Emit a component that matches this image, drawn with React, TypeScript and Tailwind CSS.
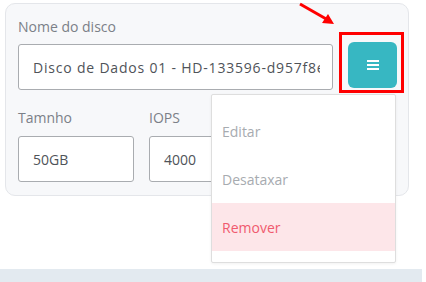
import React from "react";

export default function App() {
  return (
    <div
      className="relative w-[426px] h-[282px] bg-white overflow-hidden"
      style={{ fontFamily: '"Open Sans", sans-serif' }}
    >
      <div className="pt-[3px] pl-[5px] w-[409px]">
        <div className="rounded-[10px] border border-[#e4e6ea] bg-[#f7f8fa] pl-[12px] pr-[11px] pt-[14px] pb-[13px]">
          <div className="text-[14px] leading-[18px] text-[#7b8088]">Nome do disco</div>
          <div className="mt-[8px] flex items-center gap-[15px]">
            <div className="flex-1 min-w-0 h-[46px] rounded-[3px] border border-[#a9acb0] bg-white flex items-center pl-[14px] pr-[12px] text-[14px] tracking-[0.8px] text-[#4f5359]">
              <span className="block flex-1 min-w-0 overflow-hidden whitespace-nowrap">
                Disco de Dados 01 - HD-133596-d957f8ea
              </span>
            </div>
            <div className="w-[49px] h-[46px] -mt-[4px] rounded-[6px] bg-[#37b7c2] flex items-center justify-center">
              <div className="flex flex-col gap-[2px]">
                <div className="w-[12px] h-[2px] bg-white"></div>
                <div className="w-[12px] h-[2px] bg-white"></div>
                <div className="w-[12px] h-[2px] bg-white"></div>
              </div>
            </div>
          </div>
          <div className="mt-[19px] flex gap-[15px]">
            <div className="w-[116px]">
              <div className="text-[14px] leading-[18px] text-[#7b8088]">Tamnho</div>
              <div className="mt-[9px] h-[46px] rounded-[3px] border border-[#a9acb0] bg-white flex items-center pl-[14px] text-[14px] text-[#4f5359]">
                50GB
              </div>
            </div>
            <div className="w-[116px]">
              <div className="text-[14px] leading-[18px] text-[#7b8088]">IOPS</div>
              <div className="mt-[9px] h-[46px] rounded-[3px] border border-[#a9acb0] bg-white flex items-center pl-[14px] text-[14px] text-[#4f5359]">
                4000
              </div>
            </div>
          </div>
        </div>
      </div>

      {/* red highlight box */}
      <div className="absolute left-[339px] top-[32px] w-[65px] h-[61px] border-[3px] border-[#ff0000]"></div>

      {/* arrow */}
      <svg className="absolute left-[296px] top-[0px]" width="44" height="30" viewBox="0 0 44 30">
        <line x1="4" y1="4" x2="32" y2="20" stroke="#ff0000" strokeWidth="3" />
        <polygon points="38,24 26,23 32,14" fill="#ff0000" />
      </svg>

      {/* dropdown */}
      <div className="absolute left-[211px] top-[94px] w-[185px] h-[169px] bg-white border border-[#dedede] rounded-[2px] shadow-[0_1px_3px_rgba(0,0,0,0.06)] pt-[12px]">
        <div className="h-[48px] flex items-center pl-[10px] text-[14px] text-[#a7abb0]">Editar</div>
        <div className="h-[48px] flex items-center pl-[10px] text-[14px] text-[#a7abb0]">Desataxar</div>
        <div className="h-[48px] flex items-center pl-[10px] text-[14px] text-[#f05a6e] bg-[#fde6e9]">Remover</div>
      </div>

      {/* bottom band */}
      <div className="absolute left-0 top-[269px] w-[422px] h-[13px] bg-[#e3eaf0]"></div>
    </div>
  );
}
